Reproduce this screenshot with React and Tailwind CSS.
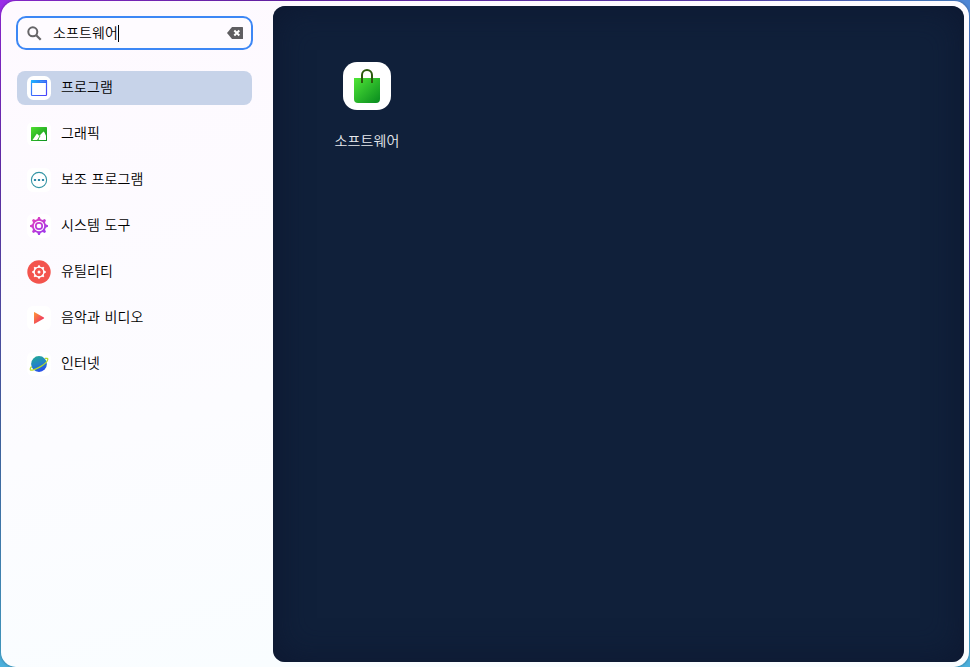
function WindowIcon() {
  return (
    <svg className="size-6" viewBox="0 0 24 24">
      <defs>
        <linearGradient id="winTop" x1="0" y1="0" x2="1" y2="0">
          <stop offset="0" stopColor="#1fb4ff" />
          <stop offset="1" stopColor="#3562f6" />
        </linearGradient>
        <linearGradient id="winFrame" x1="0" y1="0" x2="1" y2="1">
          <stop offset="0" stopColor="#2b9dff" />
          <stop offset="1" stopColor="#4a40fa" />
        </linearGradient>
      </defs>
      <rect width="24" height="24" rx="6.5" fill="#fff" />
      <rect x="4.500" y="4.500" width="15" height="15" rx="0.7" fill="#fff" stroke="url(#winFrame)" strokeWidth="1.200" />
      <rect x="4" y="4" width="16" height="3" rx="0.7" fill="url(#winTop)" />
      <path d="M13.500 5.500h1M15.500 5.500h1M17.500 5.500h1" stroke="#fff" strokeOpacity=".3" strokeWidth=".8" />
    </svg>
  );
}

function PictureIcon() {
  return (
    <svg className="size-6" viewBox="0 0 24 24">
      <defs>
        <linearGradient id="pic" x1="0" y1="0" x2="1" y2="1">
          <stop offset="0" stopColor="#4fe02f" />
          <stop offset="1" stopColor="#0b8f20" />
        </linearGradient>
      </defs>
      <rect width="24" height="24" rx="6" fill="#fff" />
      <rect x="4" y="5" width="16" height="14" rx="0.5" fill="url(#pic)" />
      <path d="M5.5 18l4.3-6.3 1.2.8 1.2 1.5L16.5 9.6l1 .8L19 13.800V18H12.400l-.9-.8-.9.800z" fill="#fff" />
      <path d="M10.5 18.1l2.6-4.300" stroke="#2db82a" strokeWidth=".9" />
    </svg>
  );
}

function DotsIcon() {
  return (
    <svg className="size-6" viewBox="0 0 24 24">
      <rect width="24" height="24" rx="6" fill="#fff" />
      <circle cx="12" cy="12" r="7.600" fill="none" stroke="#3495a5" strokeWidth="1.100" />
      <path d="M6.900 10.900h2.200v2.200H6.900zM10.900 10.900h2.200v2.200h-2.200zM14.900 10.900h2.200v2.200h-2.200z" fill="#3089a8" />
    </svg>
  );
}

const TEETH = [0, 45, 90, 135, 180, 225, 270, 315];

function GearIcon() {
  return (
    <svg className="size-6" viewBox="0 0 24 24">
      <defs>
        <linearGradient id="gear" gradientUnits="userSpaceOnUse" x1="5" y1="4" x2="18" y2="20">
          <stop offset="0" stopColor="#e63dbb" />
          <stop offset="1" stopColor="#9b39ee" />
        </linearGradient>
      </defs>
      <rect width="24" height="24" rx="6" fill="#fff" />
      <g stroke="url(#gear)" fill="none">
        <circle cx="12" cy="12" r="6.100" strokeWidth="1.800" />
        <circle cx="12" cy="12" r="3.200" strokeWidth="1.700" />
        {TEETH.map((a) => {
          const r = (a * Math.PI) / 180;
          const x = Math.sin(r);
          const y = Math.cos(r);
          return (
            <path
              key={a}
              d={`M${12 + 6 * x + 2 * y} ${12 - 6 * y + 2 * x}L${12 + 9 * x + 0.8 * y} ${12 - 9 * y + 0.8 * x}L${12 + 9 * x - 0.8 * y} ${12 - 9 * y - 0.8 * x}L${12 + 6 * x - 2 * y} ${12 - 6 * y - 2 * x}z`}
              fill="url(#gear)"
              stroke="none"
            />
          );
        })}
      </g>
    </svg>
  );
}

function UtilityIcon() {
  return (
    <svg className="size-6" viewBox="0 0 24 24">
      <circle cx="12" cy="12" r="11.700" fill="#f3544d" />
      <circle cx="12" cy="12" r="4.900" fill="none" stroke="#fff" strokeWidth="1.300" />
      <circle cx="12" cy="12" r="1.500" fill="#fff" />
      {TEETH.map((a) => (
        <path key={a} d="M10.600 7.400l.7-2.200h1.400l.7 2.200z" fill="#fff" transform={`rotate(${a} 12 12)`} />
      ))}
    </svg>
  );
}

function PlayIcon() {
  return (
    <svg className="size-6" viewBox="0 0 24 24">
      <defs>
        <linearGradient id="play" x1="0" y1="0" x2="1" y2="1">
          <stop offset="0" stopColor="#ff9a35" />
          <stop offset="0.700" stopColor="#f1415c" />
        </linearGradient>
      </defs>
      <rect width="24" height="24" rx="6" fill="#fff" />
      <path d="M7 6.600q0-.8.7-.4l9.200 5.400q.6.400 0 .8L7.700 17.700q-.7.400-.7-.4z" fill="url(#play)" />
    </svg>
  );
}

function PlanetIcon() {
  return (
    <svg className="size-6" viewBox="0 0 24 24">
      <defs>
        <linearGradient id="planet" x1="0.300" y1="0" x2="0.700" y2="1">
          <stop offset="0" stopColor="#22a898" />
          <stop offset="0.500" stopColor="#2383c8" />
          <stop offset="1" stopColor="#2745ee" />
        </linearGradient>
      </defs>
      <rect width="24" height="24" rx="6" fill="#fff" />
      <circle cx="12" cy="12" r="7.900" fill="url(#planet)" />
      <path
        d="M18 6.500c1.800-.4 2.900-.2 2.800.8-.2 2-3.900 5.500-8.600 8.100-4.400 2.400-8.300 3.500-8.900 2.300-.3-.7.200-2 1.300-3.200"
        fill="none"
        stroke="#b5dc2c"
        strokeWidth="1.300"
      />
    </svg>
  );
}

function BagIcon() {
  return (
    <svg className="size-12" viewBox="0 0 48 48">
      <defs>
        <linearGradient id="bag" x1="0" y1="0" x2="1" y2="1">
          <stop offset="0" stopColor="#4fe536" />
          <stop offset="1" stopColor="#078a1e" />
        </linearGradient>
      </defs>
      <rect width="48" height="48" rx="14" fill="#fff" />
      <path d="M11 16h26v21a4 4 0 0 1-4 4H15a4 4 0 0 1-4-4z" fill="url(#bag)" />
      <path d="M19 21v-8a5 5 0 0 1 10 0v8" fill="none" stroke="#2a5a0c" strokeWidth="2" />
    </svg>
  );
}

const CATEGORIES = [
  { label: "프로그램", Icon: WindowIcon, active: true },
  { label: "그래픽", Icon: PictureIcon },
  { label: "보조 프로그램", Icon: DotsIcon },
  { label: "시스템 도구", Icon: GearIcon },
  { label: "유틸리티", Icon: UtilityIcon },
  { label: "음악과 비디오", Icon: PlayIcon },
  { label: "인터넷", Icon: PlanetIcon },
];

function SearchField() {
  return (
    <div className="flex h-[34px] w-[237px] items-center rounded-[10px] border-2 border-[#3d87f5] bg-[#fefbff] pr-2 pl-[9px]">
      <svg className="size-[15px] shrink-0" viewBox="0 0 15 15" fill="none" stroke="#666568">
        <circle cx="5.800" cy="5.800" r="4.500" strokeWidth="2" />
        <path d="M9.200 9.200L13.700 13.700" strokeWidth="2.200" />
      </svg>
      <span className="ml-[11px] pb-[3px] text-sm leading-5 tracking-[0.1px]">소프트웨어</span>
      <span className="h-[17px] w-px bg-black" />
      <svg className="ml-auto h-3 w-4" viewBox="0 0 16 12">
        <path d="M5 0h10.500q.5 0 .5.500v11q0 .5-.5.500H5L0 6z" fill="#5f5e61" />
        <path d="M7.300 3.500l5 5M12.300 3.500l-5 5" stroke="#fff" strokeWidth="2" />
      </svg>
    </div>
  );
}

export default function App() {
  return (
    <div className="h-[667px] w-[970px] overflow-hidden bg-[linear-gradient(90deg,transparent_75%,#4f86d6_95%),linear-gradient(90deg,#9a2be8_0%,#7026b8_30%,#5a50c0_100%)] font-['Noto_Sans_CJK_KR','Noto_Sans',sans-serif] font-[350] text-black">
      <div className="h-full bg-[linear-gradient(180deg,transparent_3%,#6d32bd_25%,#4870b4_65%,#4bb0dc_100%)] p-px pb-0">
        <div className="flex h-[666px] rounded-[15px] bg-[linear-gradient(165deg,#fef9ff_0%,#fcfcff_50%,#f9fdff_80%)] pt-[5px] pr-[5px] pb-[5px] shadow-[0_0_3px_#0006]">
          <aside className="w-[272px] shrink-0 pt-[10px] pl-[15px]">
            <SearchField />
            <nav className="mt-[21px] ml-px flex w-[235px] flex-col gap-3">
              {CATEGORIES.map(({ label, Icon, active }) => (
                <div
                  key={label}
                  className={`flex h-[34px] items-center gap-[10px] rounded-lg pl-[10px] ${active ? "bg-[#c7d3e9]" : ""}`}
                >
                  <Icon />
                  <span className="pb-1 text-sm leading-5 tracking-[0.1px] [word-spacing:1.3px]">{label}</span>
                </div>
              ))}
            </nav>
          </aside>
          <main className="flex-1 rounded-xl bg-[#10203a] pt-14 pl-[46px] shadow-[inset_0_0_36px_#0d1730]">
            <div className="flex w-24 flex-col items-center text-[#e8eaee]">
              <BagIcon />
              <span className="mt-5 text-sm leading-5 tracking-[0.1px]">소프트웨어</span>
            </div>
          </main>
        </div>
      </div>
    </div>
  );
}
